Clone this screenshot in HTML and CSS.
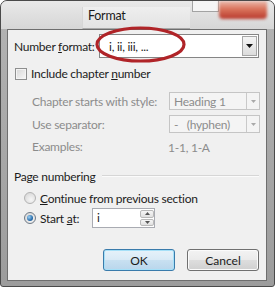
FILE: index.html
```html
<!DOCTYPE html>
<html>
<head>
<meta charset="utf-8">
<title>Format</title>
<link rel="stylesheet" href="styles.css">
</head>
<body>
<div class="window">
  <div class="titlebar">
    <div class="title-glow"><span class="title">Format</span></div>
    <div class="caption">
      <div class="cap-max"></div>
      <div class="cap-close"></div>
    </div>
  </div>
  <div class="frame-body">
    <div class="client">
      <div class="row-format">
        <span class="lbl">Number <u>f</u>ormat:</span>
        <div class="combo">
          <span class="combo-text">i, ii, iii, ...</span>
          <span class="combo-btn"><svg width="7" height="4" viewBox="0 0 7 4"><path d="M0 0H7L3.5 4Z" fill="#111"/></svg></span>
        </div>
      </div>
      <div class="row-check">
        <span class="checkbox"></span>
        <span>Include chapter <u>n</u>umber</span>
      </div>
      <div class="chapter-grid">
        <span class="dis">Chapter starts with style:</span>
        <div class="dcombo"><span class="dtext">Heading 1</span><span class="dbtn"><svg width="5" height="3" viewBox="0 0 5 3"><path d="M0 0H5L2.5 3Z" fill="#a9a9a9"/></svg></span></div>
        <span class="dis">Use separator:</span>
        <div class="dcombo"><span class="dtext">-&nbsp;&nbsp;&nbsp;(hyphen)</span><span class="dbtn"><svg width="5" height="3" viewBox="0 0 5 3"><path d="M0 0H5L2.5 3Z" fill="#a9a9a9"/></svg></span></div>
        <span class="dis">Examples:</span>
        <span class="dis ex">1-1, 1-A</span>
      </div>
      <div class="group-head"><span>Page numbering</span><span class="rule"></span></div>
      <div class="radio-row">
        <span class="radio"></span>
        <span><u>C</u>ontinue from previous section</span>
      </div>
      <div class="radio-row start">
        <span class="radio checked"></span>
        <span class="start-lbl">Start <u>a</u>t:</span>
        <div class="spin">
          <span class="spin-text">i</span>
          <span class="spin-btns">
            <span class="spin-b"><svg width="5" height="3" viewBox="0 0 5 3"><path d="M0 3H5L2.5 0Z" fill="#555"/></svg></span>
            <span class="spin-b"><svg width="5" height="3" viewBox="0 0 5 3"><path d="M0 0H5L2.5 3Z" fill="#555"/></svg></span>
          </span>
        </div>
      </div>
      <div class="buttons">
        <button class="btn ok">OK</button>
        <button class="btn">Cancel</button>
      </div>
    </div>
  </div>
  <svg class="annot" width="96" height="40" viewBox="0 0 96 40"><ellipse cx="46.5" cy="19.5" rx="43.5" ry="16.5" fill="none" stroke="#b02428" stroke-width="3.2"/></svg>
</div>
</body>
</html>
```
FILE: styles.css
```css
* { box-sizing: border-box; }
html, body { margin: 0; padding: 0; background: #fff; }
body {
  font-family: Lato, "Noto Sans", sans-serif;
  font-size: 12px;
  letter-spacing: -0.25px;
  color: #1c1c1c;
  white-space: nowrap;
}
.window {
  position: relative;
  width: 275px;
  height: 287px;
  border: 1px solid #4a4a4a;
  border-radius: 7px 7px 3px 3px;
  background: linear-gradient(#b4b4b4, #9c9c9c);
  overflow: hidden;
  display: flex;
  flex-direction: column;
}
.titlebar {
  height: 28px;
  flex: none;
  display: flex;
  background: linear-gradient(#e9e9e9, #d6d6d6);
}
.title-glow {
  margin-left: 81px;
  margin-top: 6px;
  width: 108px;
  height: 22px;
  padding-left: 5px;
  background: linear-gradient(#eeeeee, #e3e3e3);
  border-left: 1px solid #d6d6d6;
  border-bottom: 1px solid #a8a8a8;
}
.title { line-height: 17px; color: #1a1a1a; font-size: 12.5px; }
.caption {
  margin-left: auto;
  margin-right: 7px;
  display: flex;
  align-items: flex-start;
}
.cap-max {
  width: 27px;
  height: 11px;
  background: #f5f5f5;
  border: 1px solid #a3a3a3;
  border-top: none;
  filter: blur(0.6px);
}
.cap-close {
  width: 48px;
  height: 18px;
  border-radius: 0 0 4px 4px;
  background: linear-gradient(#eab9ac, #d9735b 45%, #b8382c);
  filter: blur(1.5px);
}
.frame-body {
  flex: 1;
  display: flex;
  padding: 0 7px 5px 6px;
}
.client {
  flex: 1;
  background: #f0f0f0;
  border: 1px solid #6e6e6e;
  padding: 0 6px 9px 6px;
  display: flex;
  flex-direction: column;
}
.row-format {
  margin-top: 4px;
  height: 24px;
  display: flex;
  align-items: center;
  justify-content: space-between;
}
.combo {
  width: 160px;
  height: 24px;
  margin-right: 1px;
  border: 1px solid #858585;
  background: #fff;
  display: flex;
  align-items: center;
  padding: 1px;
}
.combo-text { flex: 1; padding-left: 8px; }
.combo-btn {
  width: 15px;
  height: 100%;
  border: 1px solid #a6a6a6;
  background: linear-gradient(#f4f4f4, #dcdcdc);
  display: flex;
  align-items: center;
  justify-content: center;
}
.row-check {
  margin-top: 6px;
  height: 19px;
  display: flex;
  align-items: center;
}
.checkbox {
  width: 12px;
  height: 12px;
  margin-left: 1px;
  margin-right: 4px;
  border: 1px solid #8e8f8f;
  background: linear-gradient(135deg, #d6d6d6, #f8f8f8);
  box-shadow: inset 0 0 0 1px #f4f4f4;
}
.chapter-grid {
  margin-top: 9px;
  padding-left: 18px;
  display: grid;
  grid-template-columns: 137px 91px;
  grid-template-rows: 18px 18px 17px;
  row-gap: 5px;
  align-items: center;
}
.dis { color: #8c8c8c; }
.ex { margin-left: -1px; align-self: end; }
.dcombo {
  height: 18px;
  border: 1px solid #c5c5c5;
  background: #f4f4f4;
  display: flex;
  align-items: center;
}
.dtext { flex: 1; padding-left: 4px; color: #8c8c8c; }
.dbtn {
  width: 13px;
  height: 100%;
  border-left: 1px solid #c9c9c9;
  display: flex;
  align-items: center;
  justify-content: center;
}
.group-head {
  margin-top: 13px;
  height: 16px;
  display: flex;
  align-items: center;
}
.rule {
  flex: 1;
  margin-left: 6px;
  margin-right: 1px;
  border-top: 1px solid #d6d6d6;
  border-bottom: 1px solid #fbfbfb;
}
.radio-row {
  margin-top: 6px;
  height: 16px;
  display: flex;
  align-items: center;
  padding-left: 10px;
}
.radio-row.start { margin-top: 2px; height: 20px; }
.radio {
  width: 12px;
  height: 12px;
  border-radius: 50%;
  margin-right: 4px;
  border: 1px solid #b3b3b3;
  background: radial-gradient(circle at 60% 65%, #f6f6f6, #d2d2d2);
  display: flex;
  align-items: center;
  justify-content: center;
}
.radio.checked { border-color: #6f7a86; }
.radio.checked::after {
  content: "";
  width: 6px;
  height: 6px;
  border-radius: 50%;
  background: radial-gradient(circle at 35% 35%, #9fd3f5, #2a6fae 60%, #174a7c);
}
.start-lbl { width: 52px; }
.spin {
  width: 63px;
  height: 20px;
  border: 1px solid #a9abb2;
  background: #fff;
  display: flex;
}
.spin-text { flex: 1; padding-left: 4px; line-height: 18px; }
.spin-btns {
  width: 14px;
  display: flex;
  flex-direction: column;
  gap: 1px;
  padding: 1px 0;
}
.spin-b {
  flex: 1;
  border: 1px solid #b9b9b9;
  border-radius: 2px;
  background: linear-gradient(#f6f6f6, #e0e0e0);
  display: flex;
  align-items: center;
  justify-content: center;
}
.buttons {
  margin-top: 21px;
  display: flex;
  justify-content: flex-end;
  gap: 12px;
  padding-right: 1px;
}
.btn {
  width: 72px;
  height: 22px;
  font: inherit;
  letter-spacing: 0;
  color: #1c1c1c;
  border: 1px solid #707070;
  border-radius: 3px;
  background: linear-gradient(#f3f3f3, #ebebeb 48%, #dddddd 52%, #d0d0d0);
  box-shadow: inset 0 0 0 1px #fbfbfb;
  padding: 0;
}
.btn.ok {
  border-color: #3a7bab;
  background: linear-gradient(#e6f2fa, #d9eaf6 48%, #c8e0f1 52%, #b9d6ec);
  box-shadow: inset 0 0 0 1px #a6e0f8;
}
.annot {
  position: absolute;
  left: 93px;
  top: 24px;
}
```
